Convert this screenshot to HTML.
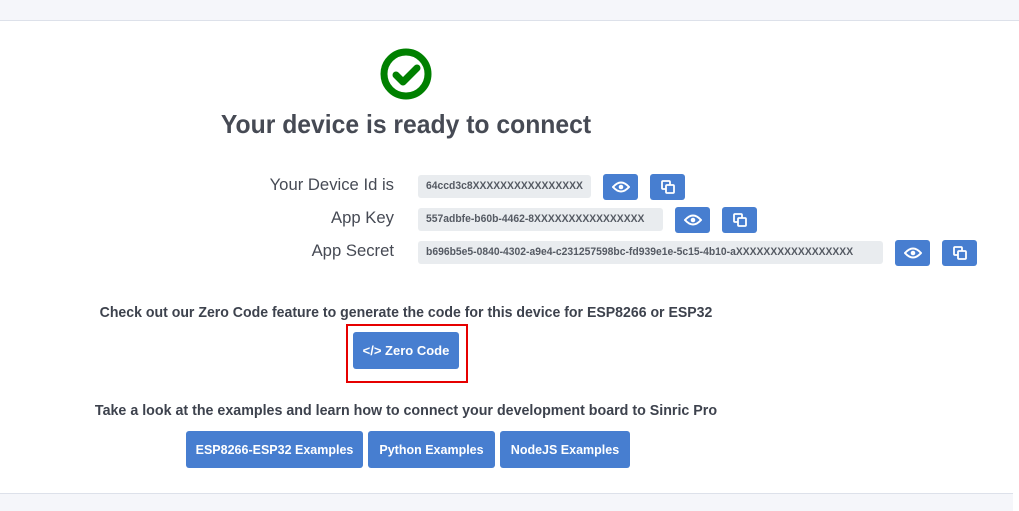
<!DOCTYPE html>
<html><head><meta charset="utf-8"><style>
*{margin:0;padding:0;box-sizing:border-box}
body{width:1019px;height:511px;background:#fff;font-family:"Liberation Sans",sans-serif;position:relative;overflow:hidden;color:#3d424d}
.top{position:absolute;left:0;top:0;width:1019px;height:21px;background:#f5f6fa;border-bottom:1px solid #dde1ea}
.bot{position:absolute;left:0;top:493px;width:1013px;height:18px;background:#f5f6fa;border-top:1px solid #dde1ea}
.a{position:absolute;white-space:nowrap}
.c{transform-origin:center;text-align:center}
.lbl{font-size:17px;text-align:right;width:300px;left:94px;transform:scaleX(.98);transform-origin:right;color:#464a54}
.box{background:#e9ecef;border-radius:3px;font-size:11px;font-weight:bold;color:#555a63;height:23px;line-height:23px;padding-left:8px;overflow:hidden}
.btn{background:#477ed0;border-radius:3px;height:26px;width:35px;display:flex;align-items:center;justify-content:center}
.b2{background:#477ed0;border-radius:3px;color:#fff;font-weight:bold;font-size:12.5px;display:flex;align-items:center;justify-content:center;height:37px}
</style></head><body>
<div class="top"></div>
<svg class="a" style="left:380px;top:48px" width="52" height="52" viewBox="0 0 52 52"><circle cx="26" cy="26" r="22" fill="none" stroke="#008000" stroke-width="7"/><path d="M16 27 L23 34 L37 20" fill="none" stroke="#008000" stroke-width="7" stroke-linecap="round" stroke-linejoin="round"/></svg>
<div class="a c" style="left:0;width:812px;top:109px;font-size:26px;font-weight:bold;color:#464a54;transform:scaleX(.95)">Your device is ready to connect</div>
<div class="a lbl" style="top:175px">Your Device Id is</div>
<div class="a lbl" style="top:208px">App Key</div>
<div class="a lbl" style="top:241px">App Secret</div>
<div class="a box" style="left:418px;top:175px;width:173px"><span style="display:inline-block;transform:scaleX(.94);transform-origin:left">64ccd3c8XXXXXXXXXXXXXXXX</span></div>
<div class="a box" style="left:418px;top:208px;width:245px"><span style="display:inline-block;transform:scaleX(.94);transform-origin:left">557adbfe-b60b-4462-8XXXXXXXXXXXXXXXX</span></div>
<div class="a box" style="left:418px;top:241px;width:465px"><span style="display:inline-block;transform:scaleX(.94);transform-origin:left">b696b5e5-0840-4302-a9e4-c231257598bc-fd939e1e-5c15-4b10-aXXXXXXXXXXXXXXXXX</span></div>
<div class="a btn" style="left:603px;top:174px"><svg width="18" height="12" viewBox="0 0 18 12"><path d="M1 6 Q9 -3 17 6 Q9 15 1 6Z" fill="none" stroke="#fff" stroke-width="2"/><circle cx="9" cy="6" r="2.3" fill="#fff"/></svg></div>
<div class="a btn" style="left:650px;top:174px"><svg width="14" height="14" viewBox="0 0 14 14"><rect x="1" y="1" width="8" height="8" rx="1" fill="none" stroke="#fff" stroke-width="1.8"/><rect x="5" y="5" width="8" height="8" rx="1" fill="#477ed0" stroke="#fff" stroke-width="1.8"/></svg></div>
<div class="a btn" style="left:675px;top:207px"><svg width="18" height="12" viewBox="0 0 18 12"><path d="M1 6 Q9 -3 17 6 Q9 15 1 6Z" fill="none" stroke="#fff" stroke-width="2"/><circle cx="9" cy="6" r="2.3" fill="#fff"/></svg></div>
<div class="a btn" style="left:722px;top:207px"><svg width="14" height="14" viewBox="0 0 14 14"><rect x="1" y="1" width="8" height="8" rx="1" fill="none" stroke="#fff" stroke-width="1.8"/><rect x="5" y="5" width="8" height="8" rx="1" fill="#477ed0" stroke="#fff" stroke-width="1.8"/></svg></div>
<div class="a btn" style="left:895px;top:240px"><svg width="18" height="12" viewBox="0 0 18 12"><path d="M1 6 Q9 -3 17 6 Q9 15 1 6Z" fill="none" stroke="#fff" stroke-width="2"/><circle cx="9" cy="6" r="2.3" fill="#fff"/></svg></div>
<div class="a btn" style="left:942px;top:240px"><svg width="14" height="14" viewBox="0 0 14 14"><rect x="1" y="1" width="8" height="8" rx="1" fill="none" stroke="#fff" stroke-width="1.8"/><rect x="5" y="5" width="8" height="8" rx="1" fill="#477ed0" stroke="#fff" stroke-width="1.8"/></svg></div>
<div class="a c" style="left:0;width:812px;top:304px;font-size:15px;font-weight:bold;transform:scaleX(.94)">Check out our Zero Code feature to generate the code for this device for ESP8266 or ESP32</div>
<div class="a" style="left:346px;top:324px;width:122px;height:59px;border:2px solid #e60000"></div>
<div class="a b2" style="left:353px;top:332px;width:106px;font-size:13px">&lt;/&gt; Zero Code</div>
<div class="a c" style="left:0;width:812px;top:402px;font-size:15px;font-weight:bold;transform:scaleX(.95)">Take a look at the examples and learn how to connect your development board to Sinric Pro</div>
<div class="a b2" style="left:186px;top:431px;width:177px">ESP8266-ESP32 Examples</div>
<div class="a b2" style="left:368px;top:431px;width:127px">Python Examples</div>
<div class="a b2" style="left:500px;top:431px;width:130px">NodeJS Examples</div>
<div class="bot"></div>
</body></html>
